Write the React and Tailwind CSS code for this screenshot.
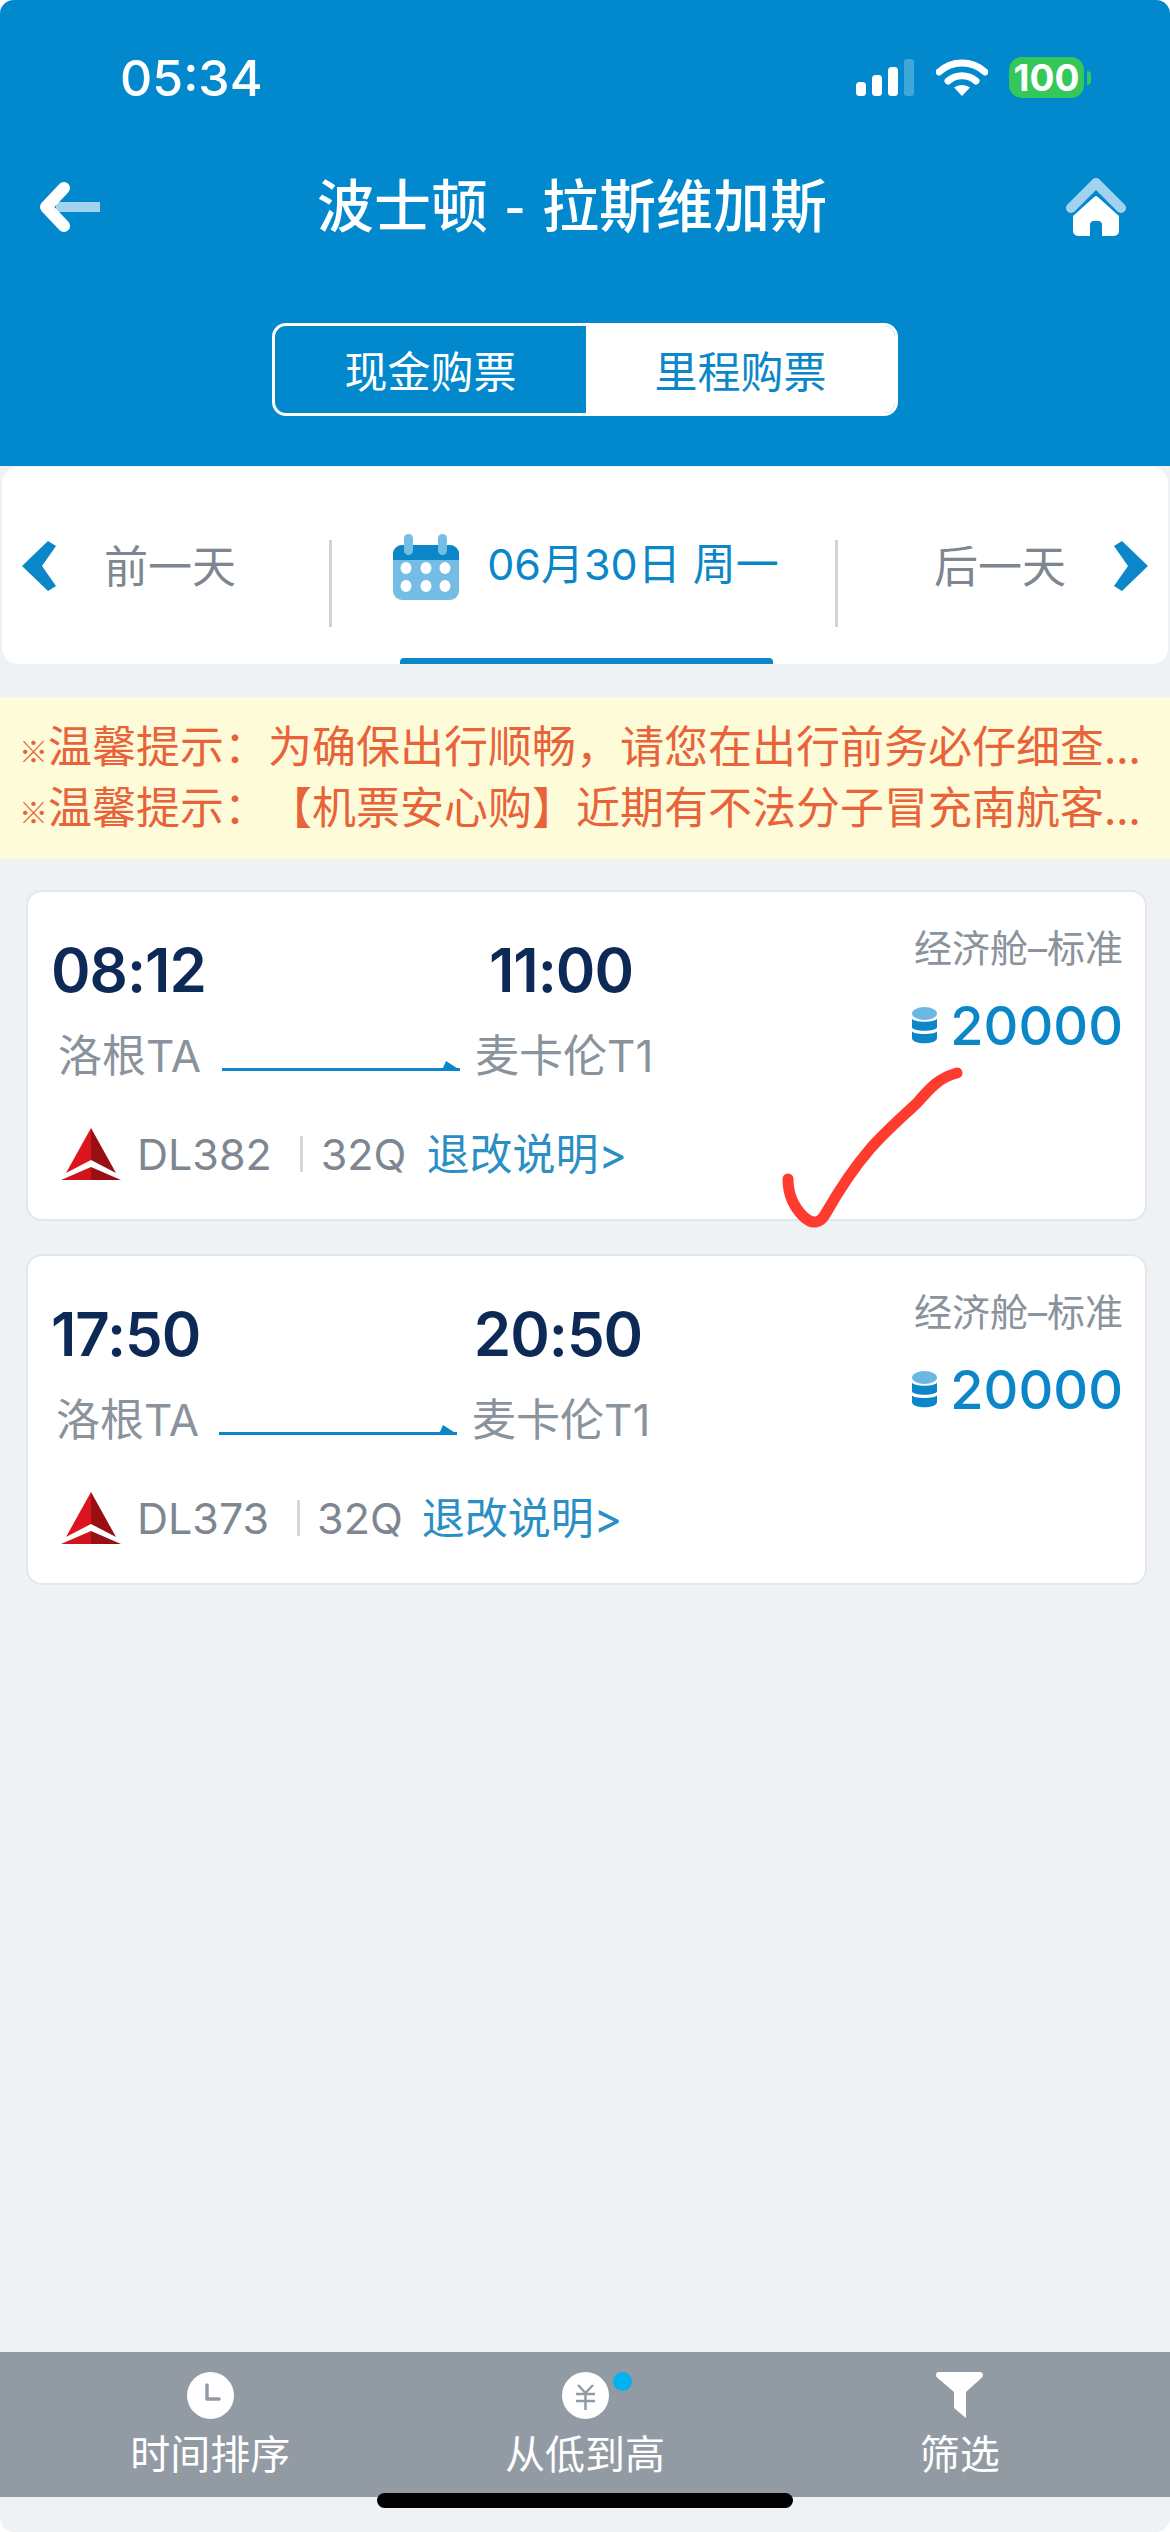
const cjk = '"Noto Sans CJK SC", sans-serif';

function Signal() {
  return (
    <svg width="58" height="37" viewBox="0 0 58 37" className="block">
      <rect x="0" y="23" width="10" height="14" rx="3.5" fill="#fff" />
      <rect x="16" y="16" width="10" height="21" rx="3.5" fill="#fff" />
      <rect x="32" y="8" width="10" height="29" rx="3.5" fill="#fff" />
      <rect x="48" y="0" width="10" height="37" rx="3.5" fill="#fff" fillOpacity="0.25" />
    </svg>
  );
}
function Wifi() {
  return (
    <svg width="52" height="37" viewBox="0 0 52 37" className="block">
      <path d="M3 13 C16 1 36 1 49 13" fill="none" stroke="#fff" strokeWidth="7" strokeLinecap="round" />
      <path d="M12 22 C20 15 32 15 40 22" fill="none" stroke="#fff" strokeWidth="7" strokeLinecap="round" />
      <path d="M18 28.5 C23 25 29 25 34 28.5 L26 37 Z" fill="#fff" />
    </svg>
  );
}
function BackIcon() {
  return (
    <svg width="62" height="50" viewBox="0 0 62 50" className="block">
      <rect x="18" y="20" width="44" height="10" fill="#a3d2ee" />
      <path d="M26 6 L8 25 L26 44" fill="none" stroke="#fff" strokeWidth="12" strokeLinecap="round" strokeLinejoin="round" />
    </svg>
  );
}
function HomeIcon() {
  return (
    <svg width="60" height="58" viewBox="0 0 60 58" className="block">
      <path d="M5 30 L30 5 L55 30" fill="none" stroke="#a3d2ee" strokeWidth="10" strokeLinecap="round" strokeLinejoin="round" />
      <path d="M30 18 Q31 18 33 20 L53 38 V53 a5 5 0 0 1 -5 5 H36 V47 a4 4 0 0 0 -4 -4 H28 a4 4 0 0 0 -4 4 V58 H12 a5 5 0 0 1 -5 -5 V38 L27 20 Q29 18 30 18 Z" fill="#fff" />
    </svg>
  );
}
function Chevron({ flip }) {
  return (
    <svg width="34" height="50" viewBox="0 0 34 50" className="block">
      <path d={flip ? "M0 5 L8 0 L34 25 L8 50 L0 45 L14 25 Z" : "M34 5 L26 0 L0 25 L26 50 L34 45 L20 25 Z"} fill="#0b87c9" />
    </svg>
  );
}
function Calendar() {
  return (
    <svg width="66" height="66" viewBox="0 0 66 66" className="block">
      <rect x="0" y="11" width="66" height="55" rx="9" fill="#74bde4" />
      <path d="M0 26 V20 a9 9 0 0 1 9 -9 H57 a9 9 0 0 1 9 9 V26 Z" fill="#0b87c9" />
      <rect x="11" y="0" width="9" height="21" rx="4.5" fill="#74bde4" />
      <rect x="45" y="0" width="9" height="21" rx="4.5" fill="#74bde4" />
      {[13, 33, 52].map((x) => [34, 52].map((y) => <ellipse key={`${x}-${y}`} cx={x} cy={y} rx="5.5" ry="6" fill="#fff" />))}
    </svg>
  );
}
function Delta() {
  return (
    <svg width="62" height="52" viewBox="0 0 62 52" className="block">
      <path d="M31 0 L31 32 L6 45 Z" fill="#dc1420" />
      <path d="M31 0 L31 32 L56 45 Z" fill="#980f14" />
      <path d="M31 39 L1 52 H31 Z" fill="#cf141d" />
      <path d="M31 39 L61 52 H31 Z" fill="#980f14" />
    </svg>
  );
}
function Coin() {
  return (
    <svg width="25" height="37" viewBox="0 0 25 37" className="block">
      <path d="M0 24 V31 C0 38 25 38 25 31 V24 C25 28 0 28 0 24 Z" fill="#0b87c9" />
      <path d="M0 11 V20 C0 25 25 25 25 20 V11 C25 16 0 16 0 11 Z" fill="#0b87c9" />
      <ellipse cx="12.5" cy="6.5" rx="12.5" ry="6.5" fill="#6cb8e2" />
    </svg>
  );
}
function FlightArrow() {
  return (
    <svg width="238" height="10" viewBox="0 0 238 10" className="block">
      <rect x="0" y="7" width="238" height="3" fill="#0b87c9" />
      <path d="M224 0 L238 9 H220 Z" fill="#0b87c9" />
    </svg>
  );
}
function ClockIcon() {
  return (
    <svg width="47" height="47" viewBox="0 0 47 47" className="block">
      <circle cx="23.5" cy="23.5" r="23.5" fill="#fff" />
      <path d="M20 13 V27 H32" fill="none" stroke="#929ba4" strokeWidth="3.5" strokeLinecap="round" strokeLinejoin="round" />
    </svg>
  );
}
function YenIcon() {
  return (
    <svg width="47" height="47" viewBox="0 0 47 47" className="block">
      <circle cx="23.5" cy="23.5" r="23.5" fill="#fff" />
      <path d="M16 13 L23.5 21 L31 13 M14 22 H33 M14 29 H33 M23.5 21 V38" fill="none" stroke="#929ba4" strokeWidth="2.5" />
    </svg>
  );
}
function FilterIcon() {
  return (
    <svg width="47" height="47" viewBox="0 0 47 47" className="block">
      <path d="M3 0 H44 Q48 0 46.5 5 L30 20 V46 L18 36 V20 L0.5 5 Q-1 0 3 0 Z" fill="#fff" />
    </svg>
  );
}

function Card({ from, to, code, nudge, arrowGap, destPad, metaPad, linkPad }) {
  return (
    <div className="flex h-[331px] rounded-[16px] border-2 border-[#e3e6ea] bg-white">
      <div className="flex-1 pl-[24px] pt-[38px]">
        <div className="flex h-[80px] items-center text-[60px] font-semibold tracking-[-1px] text-[#0d2a56]" style={{ fontFamily: 'Inter, sans-serif' }}>
          <span className="ml-[-1px] w-[419px]">{from}</span>
          <span className={`w-[182px] text-center ${nudge}`}>{to}</span>
        </div>
        <div className="mt-[6px] flex h-[80px] items-center text-[44px] text-[#8a939c]" style={{ fontFamily: `Inter, ${cjk}` }}>
          <span className={arrowGap}>洛根TA</span>
          <span className="mt-[20px]"><FlightArrow /></span>
          <span className={destPad}>麦卡伦T1</span>
        </div>
        <div className="mt-[18px] flex h-[80px] items-center text-[43px] text-[#7e8791]" style={{ fontFamily: `Inter, ${cjk}` }}>
          <span className="ml-[8px]"><Delta /></span>
          <span className="ml-[15px]">{code}</span>
          <span className="ml-[28px] h-[36px] w-[3px] bg-[#d3d8dd]" />
          <span className={metaPad}>32Q</span>
          <span className={`${linkPad} text-[#2a8fc4]`}>退改说明&gt;</span>
        </div>
      </div>
      <div className="flex w-[240px] flex-col items-end pr-[22px] pt-[31px]" style={{ fontFamily: `Inter, ${cjk}` }}>
        <div className="flex h-[50px] items-center whitespace-nowrap text-[38px] text-[#8a939c]">经济舱–标准</div>
        <div className="mt-[22px] flex h-[60px] items-center">
          <Coin />
          <span className="ml-[13px] text-[54px] font-medium text-[#0b87c9]">20000</span>
        </div>
      </div>
    </div>
  );
}

function Tab({ icon, label, dot }) {
  return (
    <div className="flex flex-1 flex-col items-center pt-[20px]">
      <div className="relative">
        {icon}
        {dot && <span className="absolute left-[51px] top-0 size-[19px] rounded-full bg-[#00b2ee]" />}
      </div>
      <span className="mt-[6px] text-[40px] leading-[54px] text-white">{label}</span>
    </div>
  );
}

export default function App() {
  return (
    <div className="h-[2532px] w-[1170px] bg-white">
      <div className="relative flex h-full w-full flex-col overflow-hidden rounded-[14px] bg-[#eef2f5]" style={{ fontFamily: cjk }}>
        <header className="h-[466px] shrink-0 bg-[#0288cd] pt-[57px] text-white">
          <div className="flex h-[41px] items-center pl-[120px] pr-[79px]">
            <span className="text-[50px] font-medium leading-none" style={{ fontFamily: 'Inter, sans-serif' }}>05:34</span>
            <div className="ml-auto flex items-center">
              <Signal />
              <span className="ml-[22px]"><Wifi /></span>
              <span className="ml-[21px] flex h-[41px] w-[75px] items-center justify-center rounded-[13px] bg-[#34c759] text-[37px] font-bold" style={{ fontFamily: 'Inter, sans-serif' }}>100</span>
              <span className="ml-[3px] h-[14px] w-[4px] rounded-r-full bg-[#34c759]" />
            </div>
          </div>
          <div className="mt-[79px] flex h-[60px] items-center justify-between pl-[38px] pr-[44px]">
            <BackIcon />
            <span className="mr-[22px] whitespace-pre pb-[10px] text-[57px] font-medium leading-none [word-spacing:4px]">波士顿 - 拉斯维加斯</span>
            <HomeIcon />
          </div>
          <div className="mt-[86px] flex justify-center">
            <div className="flex h-[93px] w-[626px] overflow-hidden rounded-[14px] border-[3px] border-white text-[43px]">
              <div className="flex w-[311px] items-center justify-center">现金购票</div>
              <div className="flex flex-1 items-center justify-center bg-white text-[#0b87c9]">里程购票</div>
            </div>
          </div>
        </header>

        <nav className="relative mx-[2px] mt-[1px] flex h-[197px] shrink-0 rounded-[16px] bg-white text-[44px] text-[#7e8791]">
          <div className="flex w-[327px] items-center pl-[20px]">
            <Chevron />
            <span className="ml-[48px] pb-[4px]">前一天</span>
          </div>
          <span className="mt-[73px] h-[87px] w-[3px] bg-[#cdd4da]" />
          <div className="flex w-[503px] items-center justify-center text-[#0b87c9]">
            <span className="ml-[5px] mt-[2px]"><Calendar /></span>
            <span className="ml-[28px] whitespace-pre pb-[2px] text-[43px]" style={{ fontFamily: `Inter, ${cjk}` }}>06月30日 周一</span>
          </div>
          <span className="mt-[73px] h-[87px] w-[3px] bg-[#cdd4da]" />
          <div className="flex flex-1 items-center justify-end pr-[20px]">
            <span className="mr-[48px] pb-[4px]">后一天</span>
            <Chevron flip />
          </div>
          <span className="absolute bottom-0 left-[398px] h-[6px] w-[373px] rounded-t-[4px] bg-[#0b87c9]" />
        </nav>

        <div className="mt-[33px] flex h-[162px] shrink-0 flex-col justify-center whitespace-nowrap bg-[#fefbd8] pl-[19px] text-[44px] leading-[55px] text-[#e8633a] [text-spacing-trim:space-all]">
          <div><span className="text-[29px] font-bold">※</span>温馨提示：为确保出行顺畅，请您在出行前务必仔细查...</div>
          <div><span className="text-[29px] font-bold">※</span>温馨提示：【机票安心购】近期有不法分子冒充南航客...</div>
        </div>

        <main className="flex flex-col gap-[33px] pl-[26px] pr-[23px] pt-[31px]">
          <Card from="08:12" to="11:00" code="DL382" nudge="" arrowGap="ml-[6px] mr-[21px]" destPad="ml-[15px]" metaPad="ml-[18px]" linkPad="ml-[20px]" />
          <Card from="17:50" to="20:50" code="DL373" nudge="ml-[-3px]" arrowGap="ml-[4px] mr-[20px]" destPad="ml-[15px]" metaPad="ml-[17px]" linkPad="ml-[19px]" />
        </main>

        <footer className="mt-auto mb-[35px] flex h-[145px] shrink-0 bg-[#929ba4] px-[23px]">
          <Tab icon={<ClockIcon />} label="时间排序" />
          <Tab icon={<YenIcon />} label="从低到高" dot />
          <Tab icon={<FilterIcon />} label="筛选" />
        </footer>
        <span className="absolute bottom-[24px] left-[377px] h-[15px] w-[416px] rounded-full bg-black" />

        <svg className="absolute left-[780px] top-[1060px]" width="185" height="172" viewBox="780 1060 185 172">
          <path d="M788 1179 C788 1195 795 1208 803 1216 C812 1225 820 1224 826 1213 C838 1192 852 1170 870 1149 C885 1132 900 1119 917 1103 C930 1088 940 1077 957 1073" fill="none" stroke="#ff3b30" strokeWidth="11" strokeLinecap="round" strokeLinejoin="round" />
        </svg>
      </div>
    </div>
  );
}
